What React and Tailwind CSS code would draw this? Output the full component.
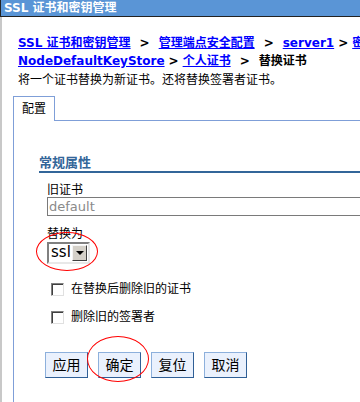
import React from 'react'

const FONT = { fontFamily: '"DejaVu Sans", "Noto Sans CJK SC", sans-serif' }

function Crumb({ children }) {
  return <a className="text-[#0000ff] underline font-bold">{children}</a>
}

function Sep() {
  return <span className="font-bold text-black px-[9px]">&gt;</span>
}

function Checkbox({ label }) {
  return (
    <div className="flex items-center h-[14px] ml-[4px]">
      <span className="w-[13px] h-[13px] bg-white border border-t-[#808080] border-l-[#808080] border-b-[#e0e0e0] border-r-[#e0e0e0] shadow-[inset_1px_1px_0_#404040]" />
      <span className="ml-[7px] text-[12px] leading-[14px]">{label}</span>
    </div>
  )
}

function Btn({ children }) {
  return (
    <button className="w-[43px] h-[26px] bg-[#eaf1fd] border border-t-[#8db0dc] border-l-[#8db0dc] border-b-[#2f5f96] border-r-[#2f5f96] text-[14px] leading-none text-black">
      {children}
    </button>
  )
}

export default function App() {
  return (
    <div className="relative w-[360px] h-[402px] overflow-hidden bg-white text-black" style={FONT}>
      {/* title bar */}
      <div className="h-[17px] bg-[#5a95d6] border-l border-b border-[#222] text-white font-bold text-[12px] leading-[16px] pl-[3px] whitespace-nowrap">
        SSL 证书和密钥管理
      </div>

      <div className="border-l-2 border-[#c8c8c8] h-[385px]">
        {/* breadcrumb */}
        <div className="pl-[16px] pt-[17px] text-[12px] leading-[18px] whitespace-nowrap">
          <div>
            <Crumb>SSL 证书和密钥管理</Crumb>
            <Sep />
            <Crumb>管理端点安全配置</Crumb>
            <Sep />
            <Crumb>server1</Crumb>
            <span className="font-bold px-[4px]">&gt;</span>
            <Crumb>密钥库和证书</Crumb>
          </div>
          <div>
            <Crumb>NodeDefaultKeyStore</Crumb>
            <span className="font-bold px-[4px]">&gt;</span>
            <Crumb>个人证书</Crumb>
            <Sep />
            <span className="font-bold">替换证书</span>
          </div>
          <div className="mt-[2px] leading-[17px]">将一个证书替换为新证书。还将替换签署者证书。</div>
        </div>

        {/* tab */}
        <div className="ml-[11px] mt-[7px] w-[600px]">
          <div className="flex h-[25px]">
            <div className="w-[42px] h-[25px] border-t border-l border-r border-[#7f9fd8] text-[12px] leading-[22px] pl-[8px] pt-[1px]">
              配置
            </div>
            <div className="flex-1 border-b border-[#7f9fd8]" />
          </div>

          <div className="border-l border-[#7f9fd8] h-[300px] pl-[25px]">
            <div className="pt-[35px]">
              <div className="text-[13px] leading-[14px] font-bold text-[#336699] pb-[1px] border-b-2 border-[#336699]">
                常规属性
              </div>
            </div>

            <div className="pl-[8px]">
              <div className="mt-[10px] text-[12px] leading-[14px]">旧证书</div>
              <div className="h-[19px] w-[500px] border border-[#7a7a7a] text-[13px] leading-[17px] text-[#8a8a8a] pl-[1px]">
                default
              </div>

              <div className="mt-[11px] text-[12px] leading-[14px]">替换为</div>
              <div className="mt-[1px] flex items-center w-[43px] h-[22px] border-2 border-t-[#808080] border-l-[#808080] border-b-[#e8e8e8] border-r-[#e8e8e8] bg-white">
                <span className="flex-1 text-[15px] leading-none pl-[2px] -mt-[1px]">ssl</span>
                <span className="w-[15px] h-[16px] mr-[1px] bg-[#d4d0c8] border border-t-[#f4f4f4] border-l-[#f4f4f4] border-b-[#404040] border-r-[#404040] flex items-center justify-center">
                  <span className="w-0 h-0 border-l-[4px] border-r-[4px] border-t-[4px] border-l-transparent border-r-transparent border-t-black" />
                </span>
              </div>

              <div className="mt-[18px]">
                <Checkbox label="在替换后删除旧的证书" />
              </div>
              <div className="mt-[14px]">
                <Checkbox label="删除旧的签署者" />
              </div>
            </div>

            <div className="mt-[28px] ml-[6px] flex gap-[10px]">
              <Btn>应用</Btn>
              <Btn>确定</Btn>
              <Btn>复位</Btn>
              <Btn>取消</Btn>
            </div>
          </div>
        </div>
      </div>

      {/* red highlight ellipses */}
      <div className="absolute left-[36px] top-[232px] w-[62px] h-[39px] rounded-[50%] border border-[#ff0000]" />
      <div className="absolute left-[87px] top-[336px] w-[62px] h-[46px] rounded-[50%] border border-[#ff0000]" />
    </div>
  )
}
